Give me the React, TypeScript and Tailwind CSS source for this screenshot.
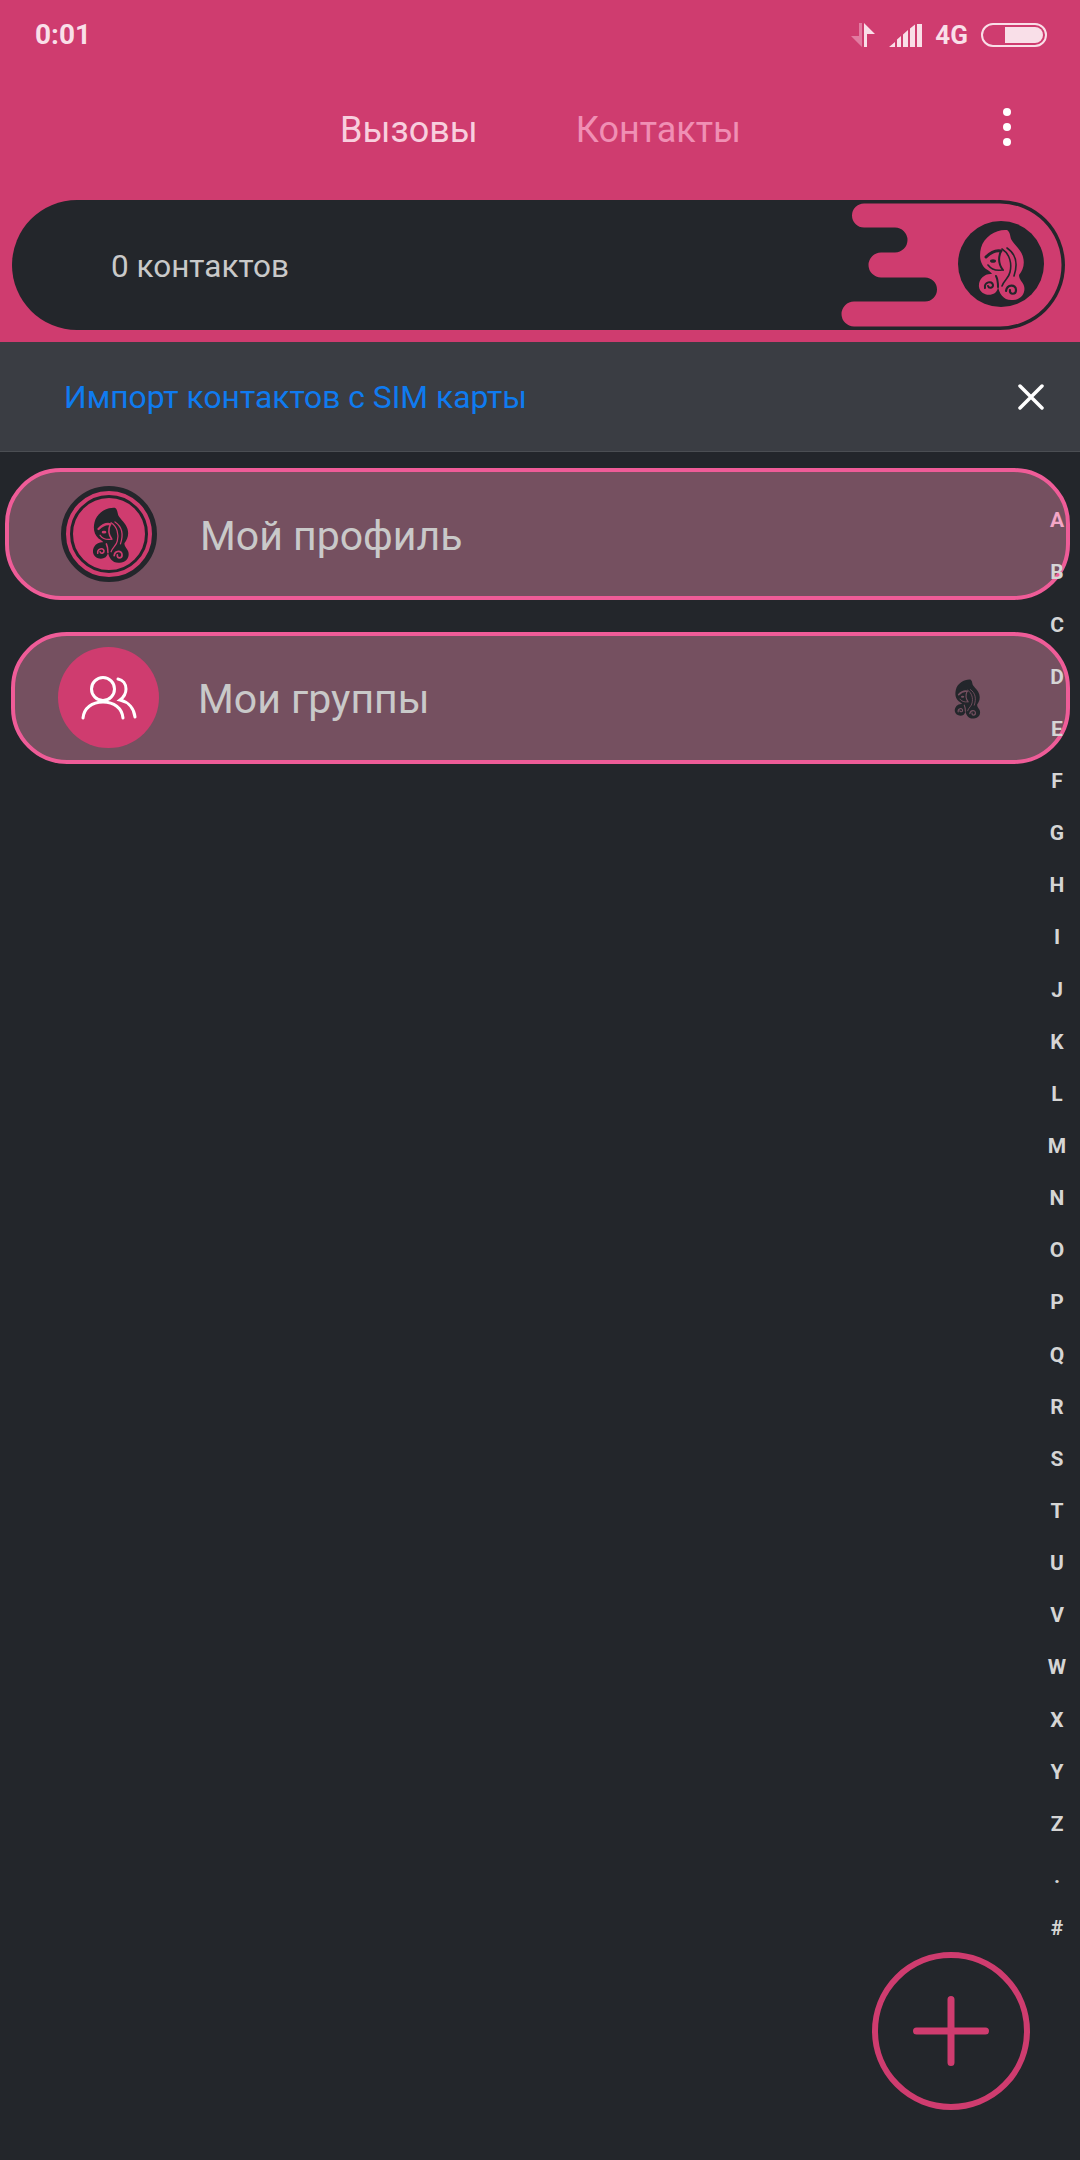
const LETTERS = ['A', 'B', 'C', 'D', 'E', 'F', 'G', 'H', 'I', 'J', 'K', 'L', 'M', 'N', 'O', 'P', 'Q', 'R', 'S', 'T', 'U', 'V', 'W', 'X', 'Y', 'Z', '.', '#']

// hair logo, drawn in an 80x88 box
function LogoPaths({ fill, detail }: { fill: string; detail: string }) {
    return (
        <>
            <path fill={fill} d="M47 10 C37 9 24 16 21 28 C19 36 20 44 26 49 C29 51 31 52 32 54 C25 53 18 59 19 67 C20 74 29 77 35 73 C37 71 38 69 38 66 C39 74 44 81 53 80 C61 80 66 73 64 66 C63 62 59 60 59 55 C63 50 65 44 63 37 C61 29 54 25 51 19 C50 15 50 12 47 10 Z" />
            <ellipse cx="33" cy="41" rx="3" ry="1.8" fill={detail} />
            <g fill="none" stroke={detail} strokeWidth="1.6" strokeLinecap="round">
                <path d="M26 37 C31 32 37 30 41 31" strokeWidth="3" />
                <path d="M41 31 C38 38 39 45 43 50" strokeWidth="2" />
                <path d="M28 45 C31 49 36 51 42 50" />
                <path d="M42 29 C50 34 52 44 50 52 C49 58 44 60 42 66" />
                <path d="M47 28 C56 34 58 44 54 56" />
                <path d="M46 71 C47 64 56 64 56 70 C56 75 49 75 50 70" strokeWidth="2.2" />
                <path d="M25 68 C24 62 32 60 33 65 C33 68 29 69 28 66" strokeWidth="2" />
                <path d="M36 56 C38 60 38 64 38 67" strokeWidth="2" />
            </g>
        </>
    )
}

function Logo({ fill, detail, className }: { fill: string; detail: string; className: string }) {
    return (
        <svg viewBox="0 0 80 88" className={className}>
            <LogoPaths fill={fill} detail={detail} />
        </svg>
    )
}

// the pink blob with fingers at the right end of the count bar
function PillBlob() {
    return (
        <svg viewBox="0 0 235 130" className="absolute right-0 top-0 h-[130px] w-[235px]">
            <path
                fill="#cf3c6f"
                d="M34 3.5 H170 A61.5 61.5 0 0 1 170 126.5 H24 A12.5 12.5 0 0 1 24 101.5 H95 A12 12 0 0 0 95 77.5 H51 A12.5 12.5 0 0 1 51 52.5 H65 A12.5 12.5 0 0 0 65 27.5 H34 A12 12 0 0 1 34 3.5 Z"
            />
            <circle cx="171" cy="64" r="43" fill="#23262b" />
            <g transform="translate(130 20)">
                <LogoPaths fill="#cf3c6f" detail="#23262b" />
            </g>
        </svg>
    )
}

function StatusIcons() {
    return (
        <div className="flex items-center">
            <svg viewBox="0 0 26 26" className="h-[26px] w-[26px]">
                <path fill="#e27ba1" d="M9 1 H12 V25 L1 14 H9 Z" />
                <path fill="#f9dfe8" d="M14 1 L25 12 H17 V25 H14 Z" />
            </svg>
            <svg viewBox="0 0 34 24" className="ml-[13px] h-[24px] w-[34px]">
                <path fill="#f9dfe8" d="M0 24 L6 19 V24 Z M8 24 V16.5 L12 13 V24 Z M14 24 V11.5 L19 7 V24 Z M21 24 V5.5 L26 1.5 V24 Z M28 24 V1 H33 V24 Z" />
            </svg>
            <span className="ml-[12px] text-[26px] leading-none font-bold text-[#f9dfe8]">4G</span>
            <div className="ml-[13px] flex h-[24px] w-[66px] justify-end rounded-full border-2 border-[#f9dfe8] p-[2px]">
                <div className="h-full w-[38px] rounded-r-full bg-[#f9dfe8]" />
            </div>
        </div>
    )
}

export default function App() {
    return (
        <div className="relative min-h-[2160px] bg-[#23262b] font-['Roboto',sans-serif]">
            <header className="h-[342px] bg-[#cf3c6f]">
                <div className="flex h-[70px] items-center justify-between pl-[35px] pr-[33px]">
                    <span className="text-[28px] font-bold text-[#f9dfe8]">0:01</span>
                    <StatusIcons />
                </div>
                <div className="relative flex h-[120px] items-center pl-[340px] text-[36px]">
                    <span className="text-[#f8cfde]">Вызовы</span>
                    <span className="ml-[98px] text-[#f08fb4]">Контакты</span>
                    <div className="absolute left-[1003px] top-[38px] flex flex-col gap-[7px]">
                        <div className="h-[8px] w-[8px] rounded-full bg-white" />
                        <div className="h-[8px] w-[8px] rounded-full bg-white" />
                        <div className="h-[8px] w-[8px] rounded-full bg-white" />
                    </div>
                </div>
                <div className="relative ml-[12px] mt-[10px] flex h-[130px] w-[1053px] items-center rounded-full bg-[#23262b] pl-[99px] pt-[4px]">
                    <span className="text-[31.5px] text-[#c9c9c9]">0 контактов</span>
                    <PillBlob />
                </div>
            </header>

            <div className="flex h-[110px] items-center justify-between border-b border-[#4b4e53] bg-[#3a3d43] pl-[64px] pr-[36px]">
                <span className="pt-[2px] text-[31.8px] text-[#0f7bf0]">Импорт контактов с SIM карты</span>
                <svg viewBox="0 0 26 26" className="h-[26px] w-[26px]">
                    <path d="M2 2 L24 24 M24 2 L2 24" stroke="#fff" strokeWidth="3.5" strokeLinecap="round" />
                </svg>
            </div>

            <div className="ml-[5px] mt-[16px] flex h-[132px] w-[1065px] items-center rounded-[56px] border-[4px] border-[#ef5c98] bg-[#755060] pl-[52px]">
                <div className="flex h-[96px] w-[96px] items-center justify-center rounded-full border-[5px] border-[#23262b] bg-[#cf3c6f]">
                    <div className="flex h-[78px] w-[78px] items-center justify-center rounded-full border-[3px] border-[#23262b]">
                        <Logo fill="#23262b" detail="#cf3c6f" className="h-[69px] w-[63px]" />
                    </div>
                </div>
                <span className="ml-[43px] pt-[5px] text-[41px] text-[#c9c9c9]">Мой профиль</span>
            </div>

            <div className="ml-[11px] mt-[32px] flex h-[132px] w-[1059px] items-center rounded-[56px] border-[4px] border-[#ef5c98] bg-[#755060] pl-[43px]">
                <div className="mb-[2px] flex h-[101px] w-[101px] shrink-0 items-center justify-center rounded-full bg-[#cf3c6f]">
                    <svg viewBox="0 0 101 101" className="h-[101px] w-[101px]" fill="none" stroke="#fff" strokeWidth="3" strokeLinecap="round">
                        <circle cx="45" cy="42" r="11.5" />
                        <path d="M25 71 C26 61 34 55 45 55 C56 55 64 61 65 71" />
                        <path d="M60 32 C65 33 68 37 68 42 C68 46 66 50 62 53 C71 55 76 62 77 70" />
                    </svg>
                </div>
                <span className="ml-[39px] pt-[4px] text-[41px] text-[#c9c9c9]">Мои группы</span>
                <Logo fill="#23262b" detail="#755060" className="ml-[514px] h-[49px] w-[45px]" />
            </div>

            <div className="absolute right-0 top-[495px] flex w-[46px] flex-col items-center text-[21px] font-bold text-[#d5d5d5]">
                {LETTERS.map((l, i) => (
                    <div key={l} className={`flex h-[52.15px] items-center ${i === 0 ? 'text-[#f4a6c6]' : ''}`}>{l}</div>
                ))}
            </div>

            <div className="absolute left-[872px] top-[1952px] flex h-[158px] w-[158px] items-center justify-center rounded-full border-[6px] border-[#cf3c6f]">
                <svg viewBox="0 0 76 70" className="h-[70px] w-[76px]">
                    <path d="M3.5 35 H72.5 M38 3.5 V66.5" stroke="#cf3c6f" strokeWidth="7" strokeLinecap="round" />
                </svg>
            </div>
        </div>
    )
}
